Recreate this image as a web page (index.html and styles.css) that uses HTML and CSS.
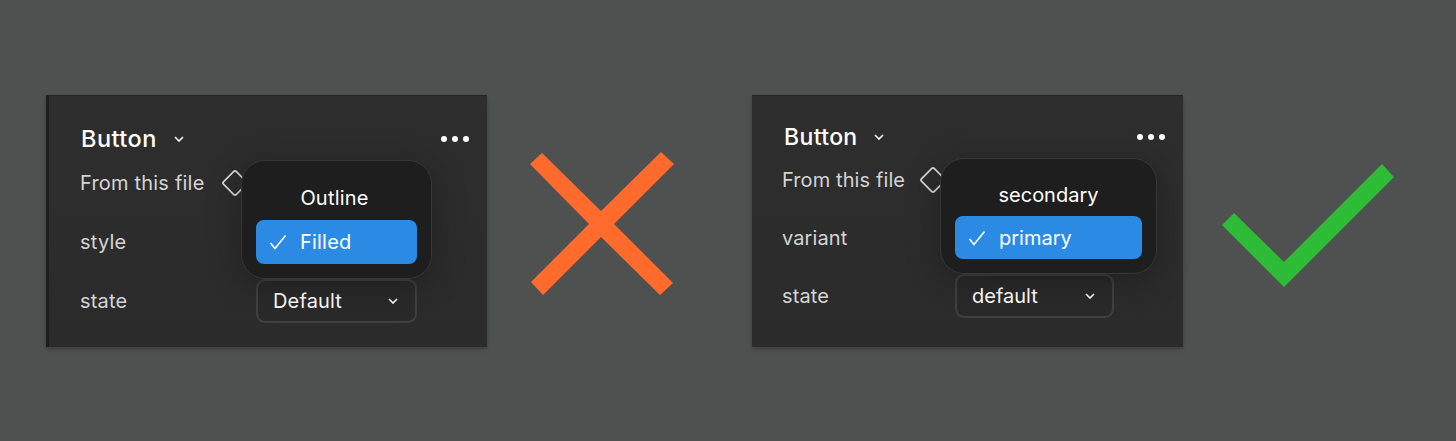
FILE: index.html
```html
<!DOCTYPE html>
<html lang="en">
<head>
<meta charset="utf-8">
<title>Button properties: do and don't</title>
<link rel="stylesheet" href="styles.css">
</head>
<body>
<main class="canvas">
  <section class="panel panel-bad">
    <header class="head">
      <h2 class="title">Button</h2>
      <svg class="chev chev-title" viewBox="0 0 10 6"><path d="M1 1l4 4 4-4"/></svg>
      <span class="dots"><i></i><i></i><i></i></span>
    </header>
    <div class="row row-source">
      <span class="label">From this file</span>
      <svg class="diamond" viewBox="0 0 30 30"><rect x="6" y="6" width="18" height="18" rx="2" transform="rotate(45 15 15)"/></svg>
    </div>
    <div class="row row-mid"><span class="label">style</span></div>
    <div class="row row-last">
      <span class="label">state</span>
      <div class="select"><span>Default</span><svg class="chev" viewBox="0 0 10 6"><path d="M1 1l4 4 4-4"/></svg></div>
    </div>
    <div class="popover">
      <div class="option">Outline</div>
      <div class="option selected">
        <svg class="check" viewBox="0 0 18 16"><path d="M1.5 9l4.5 5.5L16.500 1.500"/></svg>
        <span>Filled</span>
      </div>
    </div>
  </section>

  <svg class="mark mark-x" viewBox="530 152 144 143"><polygon points="530,164 542,153 601,211 661,152 674,164 614,224 673,283 660,295 601,237 543,295 531,282 589,224"/></svg>

  <section class="panel panel-good">
    <header class="head">
      <h2 class="title">Button</h2>
      <svg class="chev chev-title" viewBox="0 0 10 6"><path d="M1 1l4 4 4-4"/></svg>
      <span class="dots"><i></i><i></i><i></i></span>
    </header>
    <div class="row row-source">
      <span class="label">From this file</span>
      <svg class="diamond" viewBox="0 0 30 30"><rect x="6" y="6" width="18" height="18" rx="2" transform="rotate(45 15 15)"/></svg>
    </div>
    <div class="row row-mid"><span class="label">variant</span></div>
    <div class="row row-last">
      <span class="label">state</span>
      <div class="select"><span>default</span><svg class="chev" viewBox="0 0 10 6"><path d="M1 1l4 4 4-4"/></svg></div>
    </div>
    <div class="popover">
      <div class="option">secondary</div>
      <div class="option selected">
        <svg class="check" viewBox="0 0 18 16"><path d="M1.5 9l4.500 5.500L16.500 1.500"/></svg>
        <span>primary</span>
      </div>
    </div>
  </section>

  <svg class="mark mark-check" viewBox="1222 164 172 123"><polygon points="1222,225 1234,213 1284,262 1382,164 1394,177 1284,287"/></svg>
</main>
</body>
</html>
```

FILE: styles.css
```css
* { box-sizing: border-box; }

html, body {
  margin: 0;
  height: 441px;
  overflow: hidden;
  background: #4f5150;
}

body {
  font-family: Inter, "Liberation Sans", sans-serif;
  color: #fff;
}

.canvas {
  display: flex;
  align-items: flex-start;
  padding: 95px 0 0 46px;
}

.panel {
  position: relative;
  flex: none;
  height: 252px;
  background: linear-gradient(#2e2e2e, #2b2b2b);
  border-top: 1px solid #262626;
  box-shadow: 0 2px 4px rgba(0, 0, 0, .25);
}

.panel-bad {
  width: 441px;
  padding: 0 18px 0 31px;
  border-left: 3px solid #1d1d1d;
}

.panel-good {
  width: 431px;
  margin-left: 78px;
  padding: 0 18px 0 30px;
}

.head {
  display: flex;
  align-items: center;
  height: 42px;
  margin-top: 22px;
}

.panel-bad .head { padding-left: 1px; }
.panel-good .head { margin-top: 20px; padding-left: 2px; }

.title {
  margin: 0;
  font-size: 23px;
  font-weight: 500;
  letter-spacing: .35px;
  line-height: 42px;
}

.panel-bad .title {
  font-size: 23.5px;
  letter-spacing: .45px;
}

.chev {
  width: 10px;
  height: 6px;
  fill: none;
  stroke: #fff;
  stroke-width: 1.6;
}

.chev-title { margin-left: 17px; }
.panel-good .chev-title { margin-left: 16px; }

.dots {
  display: flex;
  gap: 5px;
  margin-left: auto;
}

.dots i {
  width: 6px;
  height: 6px;
  border-radius: 50%;
  background: #fff;
}

.row {
  display: flex;
  align-items: center;
}

.label {
  font-size: 20px;
  letter-spacing: .2px;
  color: #d4d4d4;
  white-space: nowrap;
}

.panel-good .label { letter-spacing: .1px; }

.row-source { height: 40px; margin-top: 3px; }
.row-mid { height: 60px; margin-top: 9px; }
.row-last { height: 44px; margin-top: 7px; }

.panel-good .row-source { margin-top: 2px; }
.panel-good .row-mid { height: 58px; }

.diamond {
  flex: none;
  width: 30px;
  height: 30px;
  margin-left: 15px;
  fill: none;
  stroke: #d8d8d8;
  stroke-width: 1.7;
}

.panel-good .diamond { margin-left: 13px; }

.select {
  display: flex;
  align-items: center;
  justify-content: space-between;
  height: 44px;
  padding: 0 17px 0 15px;
  border: 2px solid #404040;
  border-radius: 9px;
  background: #2a2a2a;
  font-size: 20px;
  letter-spacing: .15px;
  position: absolute;
}

.panel-bad .select { left: 207px; top: 183px; width: 161px; }
.panel-good .select { left: 203px; top: 178px; width: 159px; letter-spacing: 0; }

.popover {
  position: absolute;
  z-index: 1;
  display: flex;
  flex-direction: column;
  justify-content: flex-end;
  padding: 0 14px 14px;
  background: #1e1e1e;
  border: 1px solid #363636;
  border-radius: 24px;
  box-shadow: 0 6px 34px rgba(0, 0, 0, .3);
  font-size: 20px;
  letter-spacing: .2px;
}

.panel-bad .popover { left: 192px; top: 64px; width: 191px; height: 119px; }
.panel-good .popover { left: 188px; top: 62px; width: 217px; height: 116px; letter-spacing: 0; }

.option {
  display: flex;
  align-items: center;
  justify-content: center;
  height: 44px;
}

.panel-bad .option:first-child { padding-right: 4px; }

.option.selected {
  justify-content: flex-start;
  gap: 13px;
  padding-left: 13px;
  background: #2b8be4;
  border-radius: 8px;
}

.panel-good .option:first-child,
.panel-good .option.selected { height: 43px; }

.check {
  flex: none;
  width: 18px;
  height: 16px;
  fill: none;
  stroke: #fff;
  stroke-width: 1.6;
}

.mark { flex: none; }

.mark-x {
  width: 144px;
  height: 143px;
  margin: 57px 0 0 43px;
  fill: #ff6a2d;
}

.mark-check {
  width: 172px;
  height: 123px;
  margin: 69px 0 0 39px;
  fill: #2dbb38;
}
```
